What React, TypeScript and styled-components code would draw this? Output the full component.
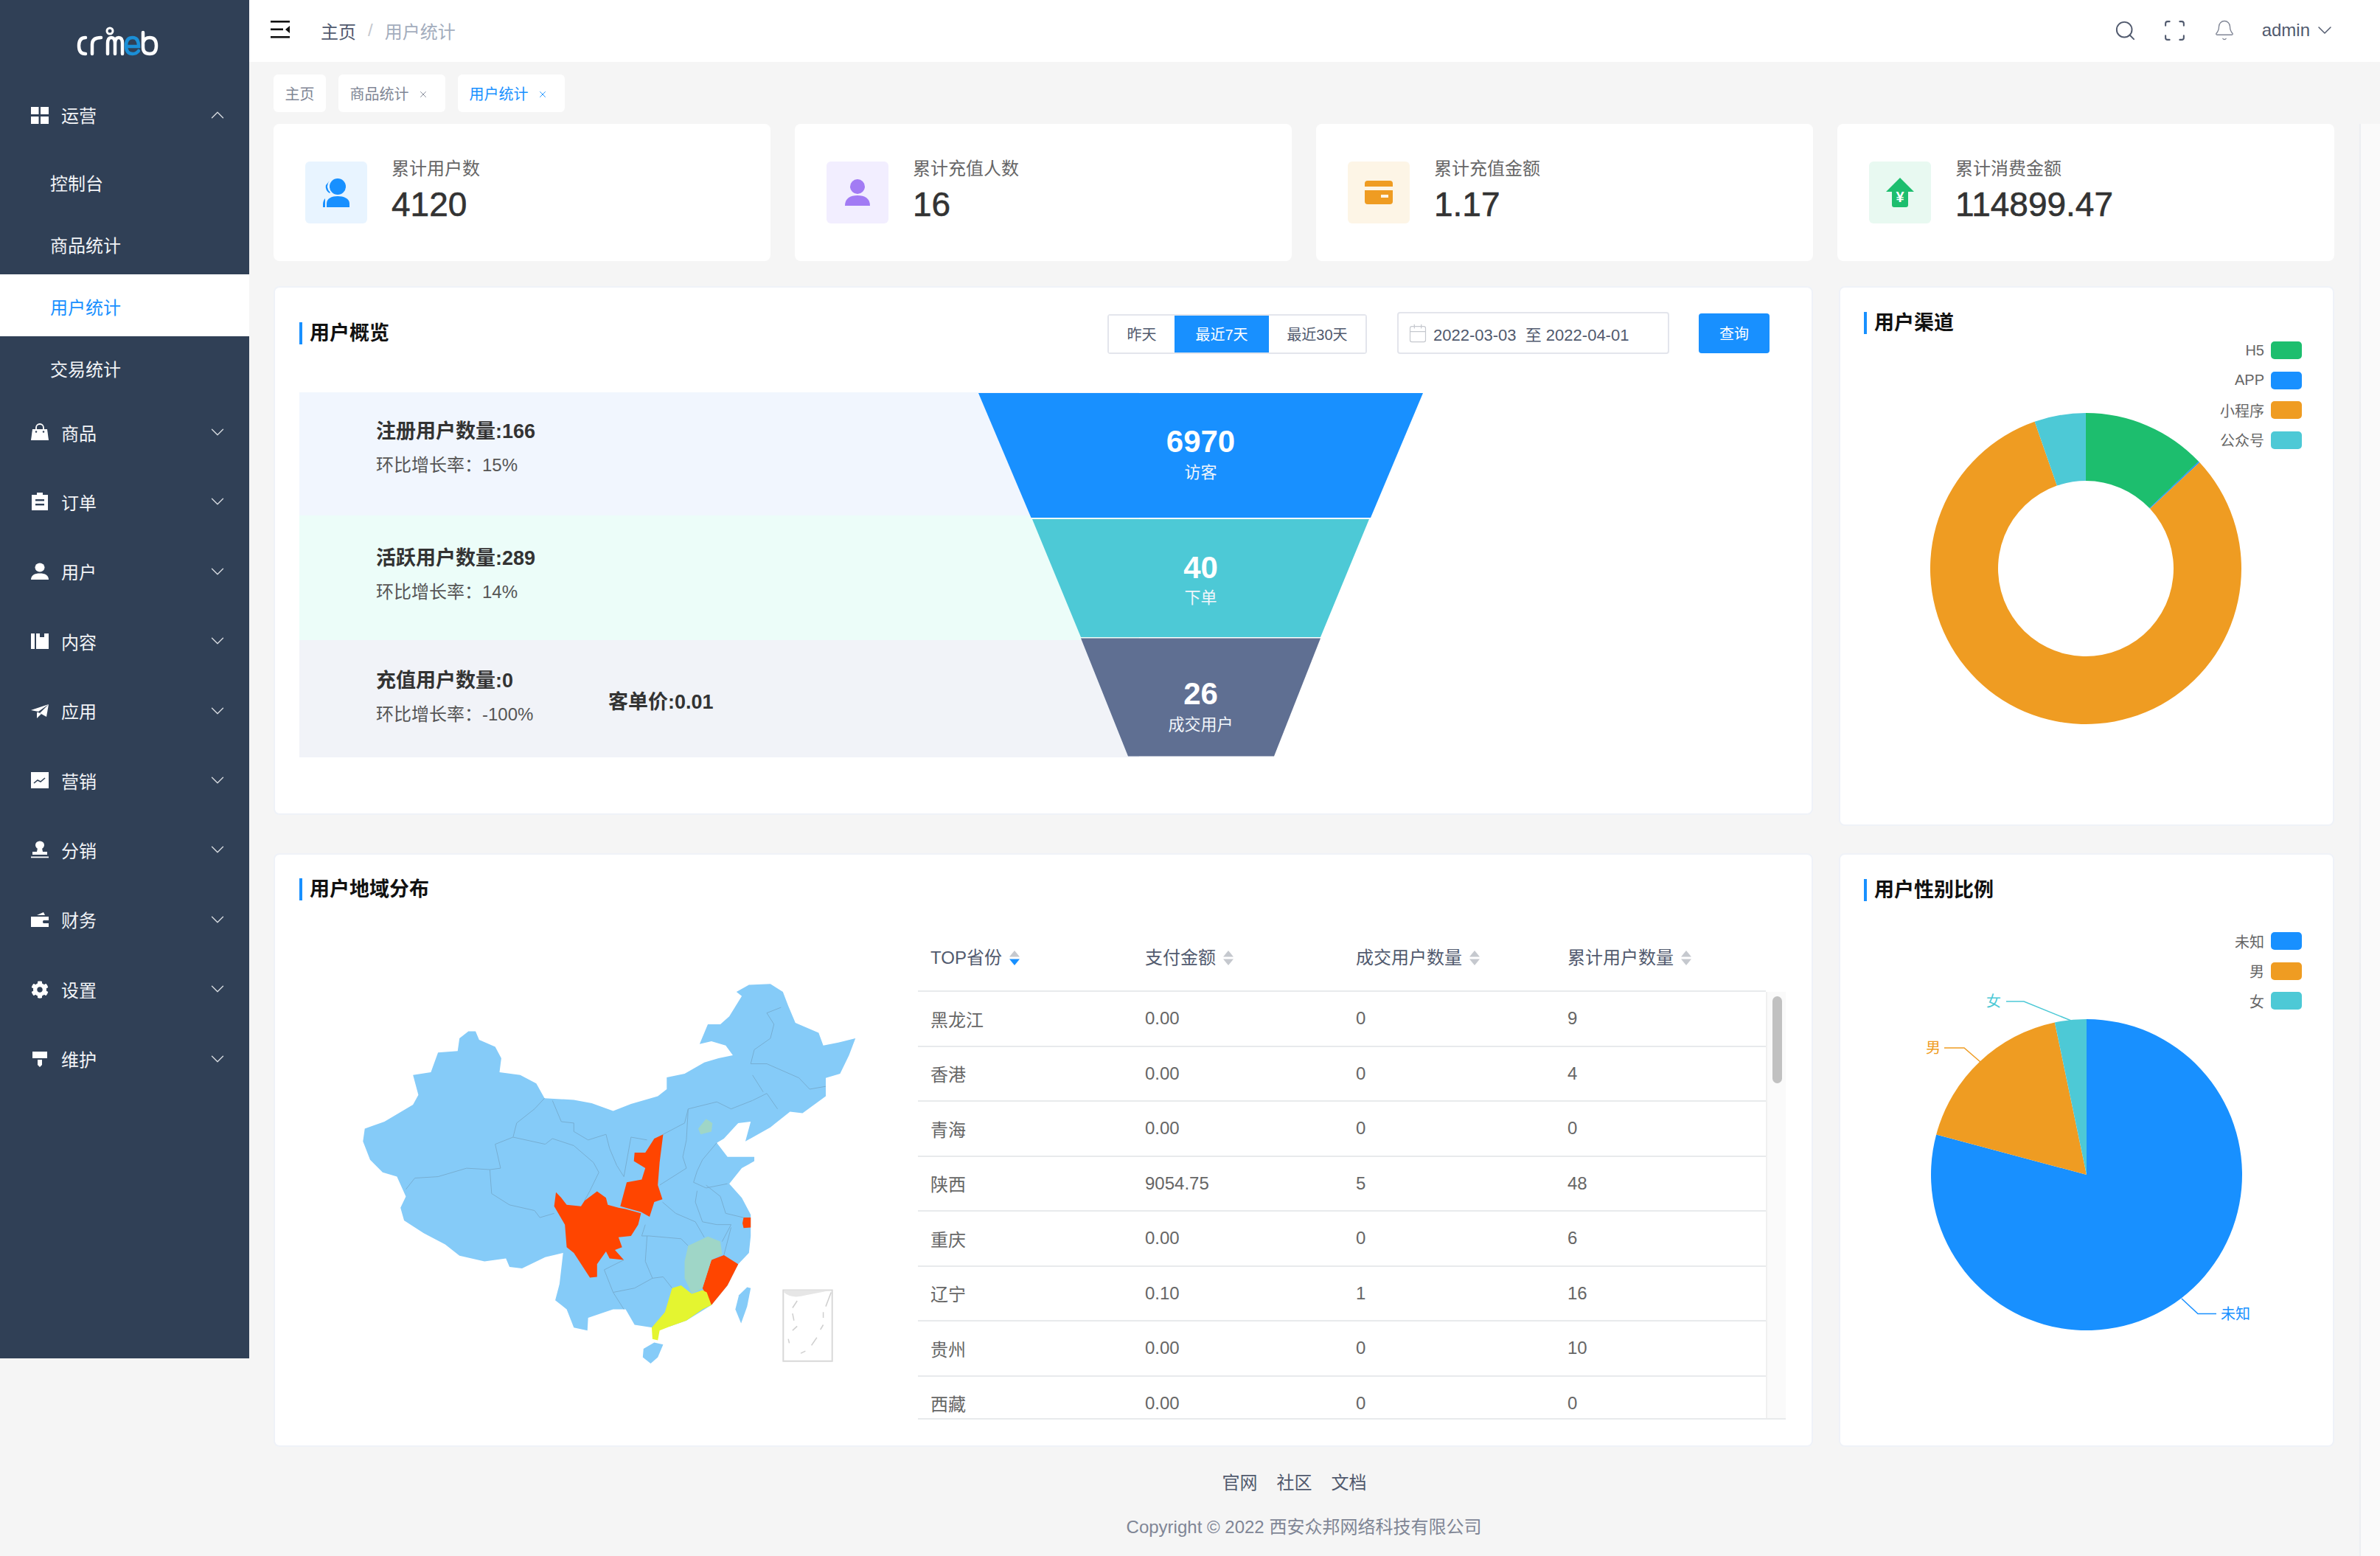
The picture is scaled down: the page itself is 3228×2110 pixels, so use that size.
import React from 'react';
import styled, { createGlobalStyle } from 'styled-components';
import { Search, Scan, Bell, ChevronDown, ChevronUp, Calendar, X } from 'lucide-react';
import { FaCog } from 'react-icons/fa';

const GlobalStyle = createGlobalStyle`
  html, body { margin: 0; padding: 0; background: #f5f5f5; }
  body { font-family: "Liberation Sans", "Noto Sans CJK SC", sans-serif; color: #515a6e; }
  * { box-sizing: border-box; }
`;

const Page = styled.div`
  display: flex;
  align-items: flex-start;
  width: 3228px;
  height: 2110px;
  overflow: hidden;
  background: #f5f5f5;
`;

/* sidebar */
const Sidebar = styled.aside`
  flex: 0 0 338px;
  height: 1842px;
  background: #304056;
  color: #f2f4f7;
`;
const LogoBox = styled.div`
  height: 110px;
  padding: 36px 0 0 104px;
`;
const MenuRow = styled.div`
  display: flex;
  align-items: center;
  height: 94.4px;
  padding: 0 28px 3px 42px;
  font-size: 24px;
`;
const MenuIcon = styled.span`
  display: flex;
  width: 24px;
  height: 24px;
  margin-right: 17px;
  color: #fff;
`;
const MenuLabel = styled.span`
  flex: 1;
`;
const SubRow = styled.div<{ $active?: boolean }>`
  display: flex;
  align-items: center;
  height: 84px;
  padding: 2px 0 0 68px;
  font-size: 24px;
  background: ${(p) => (p.$active ? '#fff' : 'transparent')};
  color: ${(p) => (p.$active ? '#1890ff' : '#f2f4f7')};
`;

/* main column */
const Main = styled.div`
  flex: 1;
  min-width: 0;
`;
const TopBar = styled.header`
  display: flex;
  align-items: center;
  height: 84px;
  background: #fff;
  padding: 0 59px 2px 29px;
  font-size: 24px;
`;
const Crumb = styled.span<{ $muted?: boolean }>`
  color: ${(p) => (p.$muted ? '#a3adbd' : '#515a6e')};
`;
const CrumbSep = styled.span`
  color: #c5c8ce;
  margin: 0 16px;
`;
const ToggleBox = styled.span`
  display: flex;
  margin: 0 42px 3px 0;
`;
const TopSpacer = styled.div`
  flex: 1;
`;
const TopIcon = styled.span<{ $gap: number }>`
  display: flex;
  margin-right: ${(p) => p.$gap}px;
  color: #515a6e;
`;
const UserCaret = styled.span`
  display: flex;
  margin-left: 4px;
  color: #515a6e;
`;
const TabBar = styled.nav`
  display: flex;
  gap: 17px;
  height: 84px;
  padding: 17px 0 0 33px;
`;
const Tab = styled.div<{ $active?: boolean }>`
  display: flex;
  align-items: center;
  height: 51px;
  padding: 0 15.5px;
  border-radius: 6px;
  background: #fff;
  font-size: 20px;
  color: ${(p) => (p.$active ? '#1890ff' : '#808695')};
  svg { margin: 2px 8px 0 12px; }
`;
const ScrollArea = styled.div`
  display: flex;
  align-items: flex-start;
`;
const Content = styled.div`
  width: 2862px;
  padding: 0 34px 0 33px;
`;
const PageTrack = styled.div`
  flex: 1;
  height: 1942px;
  background: #fafafa;
  border-left: 2px solid #eceef2;
`;

/* stat cards */
const StatGrid = styled.section`
  display: grid;
  grid-template-columns: repeat(4, 1fr);
  gap: 33px;
`;
const StatCard = styled.div`
  display: flex;
  height: 186px;
  padding: 49px 0 0 43px;
  background: #fff;
  border-radius: 8px;
`;
const StatIcon = styled.div<{ $bg: string }>`
  display: flex;
  align-items: center;
  justify-content: center;
  flex: 0 0 84px;
  height: 84px;
  margin: 2px 33px 0 0;
  border-radius: 6px;
  background: ${(p) => p.$bg};
`;
const StatLabel = styled.div`
  font-size: 24px;
  line-height: 24px;
  color: #666;
`;
const StatValue = styled.div`
  margin-top: 6px;
  font-size: 46px;
  line-height: 60px;
  color: #333;
  -webkit-text-stroke: 0.6px #333;
`;

/* panels */
const PanelRow = styled.section`
  display: grid;
  grid-template-columns: 1fr 672px;
  gap: 35px;
  align-items: start;
`;
const FirstPanels = styled(PanelRow)`
  margin-top: 34px;
`;
const SecondPanels = styled(PanelRow)`
  margin-top: 37px;
`;
const Panel = styled.div<{ $height: number }>`
  position: relative;
  height: ${(p) => p.$height}px;
  background: #fff;
  border: 2px solid #eff2f8;
  border-radius: 8px;
`;
const PanelTitle = styled.h3`
  margin: 0;
  height: 30px;
  padding-left: 10px;
  border-left: 4px solid #1890ff;
  font-size: 27px;
  line-height: 30px;
  font-weight: 600;
  color: #111;
`;
const SideHead = styled.div`
  padding: 33px 32px 0;
`;
const MapHead = styled.div`
  padding: 32px 33px 0;
`;

/* overview */
const OverviewHead = styled.div`
  display: flex;
  align-items: center;
  justify-content: space-between;
  height: 57px;
  margin: 33px 57px 0 33px;
`;
const Controls = styled.div`
  display: flex;
  align-items: center;
`;
const RangeGroup = styled.div`
  display: flex;
  height: 54px;
  margin-top: 2px;
  margin-right: 41px;
  border: 2px solid #e3e5ec;
  border-radius: 4px;
  font-size: 20px;
  color: #515a6e;
`;
const RangeItem = styled.div<{ $active?: boolean; $w: number }>`
  display: flex;
  align-items: center;
  justify-content: center;
  width: ${(p) => p.$w}px;
  background: ${(p) => (p.$active ? '#1890ff' : '#fff')};
  color: ${(p) => (p.$active ? '#fff' : '#515a6e')};
`;
const DateBox = styled.div`
  display: flex;
  align-items: center;
  width: 369px;
  height: 57px;
  margin-right: 40px;
  padding-left: 12px;
  border: 2px solid #e3e5ec;
  border-radius: 4px;
  font-size: 22px;
  color: #515a6e;
  svg { margin-right: 7px; }
`;
const QueryButton = styled.button`
  width: 96px;
  height: 54px;
  border: 0;
  border-radius: 4px;
  background: #1890ff;
  color: #fff;
  font: inherit;
  font-size: 20px;
`;
const FunnelStage = styled.div`
  position: relative;
  width: 1139px;
  margin: 52px 0 0 33px;
`;
const FunnelRow = styled.div<{ $bg: string; $h: number; $top: number }>`
  display: flex;
  align-items: flex-start;
  height: ${(p) => p.$h}px;
  padding: ${(p) => p.$top}px 0 0 104px;
  background: ${(p) => p.$bg};
`;
const Metric = styled.div`
  width: 315px;
`;
const MetricTitle = styled.div`
  font-size: 27px;
  line-height: 40px;
  font-weight: 600;
  color: #333;
`;
const MetricSub = styled.div`
  margin-top: 9px;
  font-size: 24px;
  line-height: 34px;
  color: #555;
`;
const PerUnit = styled(MetricTitle)`
  margin-top: 29px;
`;
const FunnelSvg = styled.svg`
  position: absolute;
  left: 921px;
  top: 0;
`;

/* charts */
const Legend = styled.div<{ $top: number }>`
  position: absolute;
  right: 42px;
  top: ${(p) => p.$top}px;
  display: flex;
  flex-direction: column;
  gap: 16.5px;
`;
const LegendItem = styled.div`
  display: flex;
  align-items: center;
  justify-content: flex-end;
  gap: 9px;
  height: 24px;
  font-size: 20px;
  color: #666;
`;
const Swatch = styled.span<{ $color: string }>`
  width: 42px;
  height: 24px;
  border-radius: 5px;
  background: ${(p) => p.$color};
`;
const ChartSvg = styled.svg<{ $top: number }>`
  display: block;
  position: absolute;
  left: 0;
  top: ${(p) => p.$top}px;
`;

/* map + table */
const MapBody = styled.div`
  display: flex;
  align-items: flex-start;
  margin-top: 37px;
  padding-left: 66px;
`;
const MapSvg = styled.svg`
  flex: 0 0 760px;
  margin-top: 20px;
  margin-right: 46px;
`;
const TableBox = styled.div`
  width: 1177px;
`;
const HeadGrid = styled.div`
  display: grid;
  grid-template-columns: 291px 286px 287px 1fr;
  width: 1150px;
  height: 87px;
  padding: 26px 0 0 17px;
  border-bottom: 2px solid #e8eaec;
  font-size: 24px;
  line-height: 30px;
  color: #515a6e;
`;
const HeadCell = styled.div`
  display: flex;
  align-items: center;
  height: 30px;
  svg { margin-left: 9px; }
`;
const TableBody = styled.div`
  display: flex;
  height: 580px;
  border-bottom: 2px solid #e8eaec;
`;
const RowsClip = styled.div`
  width: 1150px;
  overflow: hidden;
`;
const BodyRow = styled.div`
  display: grid;
  grid-template-columns: 291px 286px 287px 1fr;
  align-items: center;
  height: 74.5px;
  padding-left: 17px;
  border-bottom: 2px solid #e8eaec;
  font-size: 24px;
  color: #666;
`;
const TableTrack = styled.div`
  flex: 1;
  padding: 6px 5px 0 7px;
  background: #fafafa;
  border-left: 2px solid #f0f0f0;
`;
const TableThumb = styled.div`
  height: 118px;
  border-radius: 8px;
  background: #c1c1c1;
`;

/* footer */
const Footer = styled.footer`
  padding-top: 34px;
  text-align: center;
`;
const FooterLinks = styled.div`
  font-size: 24px;
  line-height: 30px;
  color: #515a6e;
  span { margin-right: 26px; }
`;
const Copyright = styled.div`
  margin-top: 30px;
  font-size: 24px;
  line-height: 30px;
  color: #808695;
`;

const DARK = '#304056';
const BLUE = '#1890ff';
const TEAL = '#4dc9d6';
const ORANGE = '#ef9c22';
const GREEN = '#1dbe6e';

const Logo = () => (
  <svg width="112" height="40" viewBox="0 0 112 40" fill="none" stroke="#fff" strokeWidth="4.5" strokeLinecap="round">
    <path d="M12 15Q3 15 3 26Q3 37 12 37" />
    <path d="M21 37V24Q21 15 33 15" />
    <path d="M42 37V23Q42 15 47 15Q52 15 52 23V37M52 23Q52 15 57 15Q62 15 62 23V37" />
    <path d="M68 27H84Q84 15 76 15Q67 15 67 26Q67 37 76 37Q81 37 84 33" stroke="#1b8fd6" />
    <path d="M90 8V28Q90 37 99 37Q108 37 108 26Q108 15 99 15Q92 15 90 22" />
    <circle cx="45" cy="6" r="4" strokeWidth="3" />
  </svg>
);

const sideIcons: Record<string, React.ReactNode> = {
  grid: (
    <svg viewBox="0 0 24 24" width="24" height="24" fill="currentColor">
      <rect x="0" y="1" width="10.5" height="10" />
      <rect x="13" y="1" width="11" height="10" />
      <rect x="0" y="14" width="10.5" height="10" />
      <rect x="13" y="14" width="11" height="10" />
    </svg>
  ),
  bag: (
    <svg viewBox="0 0 24 24" width="24" height="24" fill="currentColor">
      <path d="M2 8h20l2 15H0z" />
      <path d="M7 9V6a5 5 0 0 1 10 0v3" fill="none" stroke="currentColor" strokeWidth="1.8" />
      <circle cx="7" cy="11.5" r="1.2" fill={DARK} />
      <circle cx="17" cy="11.5" r="1.2" fill={DARK} />
    </svg>
  ),
  order: (
    <svg viewBox="0 0 24 24" width="24" height="24" fill="currentColor">
      <path d="M1 3h7V0h8v3h7v21H1z" />
      <rect x="6" y="9" width="12" height="2.4" fill={DARK} />
      <rect x="6" y="15" width="12" height="2.4" fill={DARK} />
    </svg>
  ),
  user: (
    <svg viewBox="0 0 24 24" width="24" height="24" fill="currentColor">
      <ellipse cx="12" cy="6.5" rx="6.5" ry="6" />
      <path d="M0 23c0-6 5-8.500 12-8.500S24 17 24 23z" />
    </svg>
  ),
  content: (
    <svg viewBox="0 0 24 24" width="24" height="24" fill="currentColor">
      <rect x="0" y="2" width="5" height="21" />
      <path d="M7 2h5v5h6V2h6v21H7z" />
    </svg>
  ),
  plane: (
    <svg viewBox="0 0 24 24" width="24" height="24" fill="currentColor">
      <path d="M0 11 24 3 10 13z" />
      <path d="M24 3 21 20 12 15z" />
      <path d="M8 14l2 0 4 2-6 6z" />
    </svg>
  ),
  chart: (
    <svg viewBox="0 0 24 24" width="24" height="24" fill="currentColor">
      <rect x="0" y="1" width="24" height="22" />
      <path d="M4 16l5-4 4 2 6-5" fill="none" stroke={DARK} strokeWidth="1.6" />
    </svg>
  ),
  stamp: (
    <svg viewBox="0 0 24 24" width="24" height="24" fill="currentColor">
      <ellipse cx="12" cy="6" rx="6" ry="5.500" />
      <path d="M9 10h6l1 5h6v4H2v-4h6z" />
      <rect x="0" y="21.500" width="24" height="1.800" />
    </svg>
  ),
  wallet: (
    <svg viewBox="0 0 24 24" width="24" height="24" fill="currentColor">
      <path d="M8 6l9-4 2 4z" />
      <path d="M0 8h24v5h-7a2.500 2.500 0 0 0 0 4h7v5H0z" />
    </svg>
  ),
  gear: <FaCog size={26} />,
  pin: (
    <svg viewBox="0 0 24 24" width="24" height="24" fill="currentColor">
      <rect x="2" y="2" width="20" height="9" />
      <path d="M9 13h6v7l-3 3-3-3z" />
    </svg>
  ),
};

const menuAfter = [
  { label: '商品', icon: 'bag' },
  { label: '订单', icon: 'order' },
  { label: '用户', icon: 'user' },
  { label: '内容', icon: 'content' },
  { label: '应用', icon: 'plane' },
  { label: '营销', icon: 'chart' },
  { label: '分销', icon: 'stamp' },
  { label: '财务', icon: 'wallet' },
  { label: '设置', icon: 'gear' },
  { label: '维护', icon: 'pin' },
];

const tableRows = [
  ['黑龙江', '0.00', '0', '9'],
  ['香港', '0.00', '0', '4'],
  ['青海', '0.00', '0', '0'],
  ['陕西', '9054.75', '5', '48'],
  ['重庆', '0.00', '0', '6'],
  ['辽宁', '0.10', '1', '16'],
  ['贵州', '0.00', '0', '10'],
  ['西藏', '0.00', '0', '0'],
];

const SortIcon = ({ active }: { active?: boolean }) => (
  <svg width="16" height="20" viewBox="0 0 16 20">
    <path d="M8 0l7 8.500H1z" fill="#c5c8ce" />
    <path d="M8 20l7-8.500H1z" fill={active ? BLUE : '#c5c8ce'} />
  </svg>
);

// pie slice, angles in degrees clockwise from 12 o'clock
const slice = (cx: number, cy: number, r: number, inner: number, a: number, b: number) => {
  const pt = (rad: number, deg: number) => {
    const t = (deg * Math.PI) / 180;
    return `${cx + rad * Math.sin(t)} ${cy - rad * Math.cos(t)}`;
  };
  const large = b - a > 180 ? 1 : 0;
  if (!inner) return `M${cx} ${cy}L${pt(r, a)}A${r} ${r} 0 ${large} 1 ${pt(r, b)}Z`;
  return `M${pt(r, a)}A${r} ${r} 0 ${large} 1 ${pt(r, b)}L${pt(inner, b)}A${inner} ${inner} 0 ${large} 0 ${pt(inner, a)}Z`;
};

const chinaOutline =
  '405,315 425,315 435,345 480,370 497,410 492,460 550,470 595,500 618,552 700,558 750,570 810,597 860,572 935,545 960,520 960,478 1010,465 1065,425 1105,410 1145,400 1125,365 1085,350 1052,360 1075,290 1110,290 1135,262 1170,190 1155,175 1190,150 1250,147 1285,175 1300,225 1320,285 1385,320 1398,365 1440,355 1488,340 1470,400 1445,465 1405,480 1405,545 1340,605 1305,600 1250,655 1180,705 1195,635 1160,640 1120,695 1100,710 1130,760 1205,760 1205,775 1170,800 1135,855 1170,905 1195,965 1195,1040 1190,1100 1160,1140 1130,1215 1085,1285 1015,1340 970,1360 920,1365 870,1355 845,1300 810,1300 740,1330 738,1375 700,1365 680,1300 648,1268 660,1210 670,1100 620,1115 555,1155 520,1150 510,1120 450,1130 380,1110 340,1070 280,1030 225,985 215,940 230,900 205,830 165,815 130,770 110,705 115,660 170,635 250,575 265,540 250,470 300,460 320,390 375,385 380,340';

const provinceLines = [
  '618,552 590,590 540,640 530,690 480,715 495,800 465,805 400,800 320,830 255,835 230,875',
  '530,690 620,715 640,695 700,720 755,780 770,815 745,880 730,915',
  '465,805 470,890 520,930 590,950 605,975 645,960',
  '640,560 665,635 700,640 700,670 740,700 790,680 800,730 820,790 840,830 860,690 905,700',
  '950,680 1010,640 1020,590 1100,565 1140,590 1200,560 1240,535 1270,590',
  '1195,430 1205,380 1250,340 1260,290 1240,250 1280,230',
  '1195,430 1240,430 1330,480 1360,520 1405,510',
  '1200,470 1230,530',
  '1020,590 1015,700 1005,760 1015,800 940,860',
  '1100,710 1060,770 1045,810 1035,850 1070,870 1130,855',
  '948,920 985,960 1040,990 1065,1045',
  '1045,880 1040,920 1060,990 1100,1000 1140,1000 1115,1060',
  '1070,860 1110,900 1125,960 1175,975',
  '900,1000 890,1040 910,1040 1000,1050 1020,1075',
  '905,1040 900,1130 920,1190 870,1225 810,1240 785,1160 840,1125',
  '920,1190 950,1185 975,1225',
  '810,1240 840,1300',
  '1120,1108 1140,1010',
];

const ChinaMap = () => (
  <MapSvg width="760" height="600" viewBox="0 0 1568 1568" preserveAspectRatio="none">
    <polygon points={chinaOutline} fill="#85cbf8" />
    <polygon points="1185,1222 1195,1225 1185,1290 1168,1350 1152,1300 1162,1250" fill="#85cbf8" />
    <polygon points="925,1418 950,1425 935,1470 915,1492 893,1470 895,1440" fill="#85cbf8" />
    {provinceLines.map((pts) => (
      <polyline key={pts} points={pts} fill="none" stroke="#76aed2" strokeWidth="1" vectorEffect="non-scaling-stroke" />
    ))}
    <polygon points="650,885 665,905 680,930 720,935 730,915 765,882 790,905 795,930 825,940 845,945 888,960 880,1000 860,1040 825,1045 835,1080 815,1090 840,1125 800,1120 790,1095 765,1140 765,1185 745,1188 700,1100 680,1080 675,1000 645,935" fill="#ff4500" />
    <polygon points="925,695 950,680 945,730 940,780 935,860 948,910 925,920 912,972 888,955 830,935 848,850 890,840 900,800 868,775 870,745 900,745" fill="#ff4500" />
    <polygon points="1120,1108 1160,1140 1130,1215 1085,1285 1060,1225 1085,1125" fill="#ff4500" />
    <polygon points="1175,975 1195,975 1195,1010 1175,1012 1172,995" fill="#ff4500" />
    <polygon points="1020,1075 1075,1042 1110,1060 1115,1105 1085,1125 1060,1225 1030,1245 1010,1190 1010,1130" fill="#9fd6c7" />
    <polygon points="1070,625 1088,640 1085,670 1055,680 1048,660" fill="#9fd6c7" />
    <polygon points="975,1225 1000,1215 1030,1245 1060,1232 1072,1240 1085,1285 1060,1300 1015,1340 970,1360 940,1375 935,1410 920,1405 918,1365 955,1310" fill="#e4f530" />
    <rect x="1286" y="1232" width="137" height="252" fill="#fff" stroke="#d8d8d8" strokeWidth="2" vectorEffect="non-scaling-stroke" />
    <path d="M1288 1240Q1310 1265 1350 1250L1422 1232H1288z" fill="#e6e6e6" />
    <path d="M1420 1240 1405 1290M1398 1310V1330M1398 1355 1390 1372M1325 1360 1312 1375M1312 1315 1316 1340M1325 1270 1312 1295M1300 1405 1303 1420M1380 1400 1365 1428M1348 1448 1335 1456" stroke="#cfcfcf" strokeWidth="1.500" vectorEffect="non-scaling-stroke" fill="none" />
  </MapSvg>
);

const stats = [
  {
    label: '累计用户数',
    value: '4120',
    bg: '#e8f4ff',
    icon: (
      <svg width="40" height="42" viewBox="0 0 40 42" fill={BLUE}>
        <circle cx="22" cy="13" r="11" />
        <path d="M7 41V36c0-7 7-10 15-10s16 3 16 10v5z" />
        <path d="M11 5a11 11 0 0 0 1 16l-1 1C7 20 5 15 6 11z" />
        <path d="M5 29c-2 2-3 5-3 8v4h3z" />
      </svg>
    ),
  },
  {
    label: '累计充值人数',
    value: '16',
    bg: '#f2eeff',
    icon: (
      <svg width="38" height="38" viewBox="0 0 38 38" fill="#a27bf4">
        <circle cx="19" cy="11" r="10" />
        <path d="M2 37c0-10 7-14 17-14s17 4 17 14z" />
      </svg>
    ),
  },
  {
    label: '累计充值金额',
    value: '1.17',
    bg: '#fdf5e6',
    icon: (
      <svg width="38" height="32" viewBox="0 0 38 32">
        <rect x="0" y="0" width="38" height="32" rx="4" fill={ORANGE} />
        <rect x="0" y="8" width="38" height="5" fill="#fdf5e6" />
        <rect x="22" y="19" width="10" height="4" fill="#fdf5e6" />
      </svg>
    ),
  },
  {
    label: '累计消费金额',
    value: '114899.47',
    bg: '#e8f9f1',
    icon: (
      <svg width="38" height="40" viewBox="0 0 38 40">
        <path d="M19 0l19 19H30v18a3 3 0 0 1-3 3H11a3 3 0 0 1-3-3V19H0z" fill={GREEN} />
        <text x="19" y="33" textAnchor="middle" fontSize="20" fontWeight="700" fill="#fff">¥</text>
      </svg>
    ),
  },
];

const funnel = [
  { pts: '0,1 603,1 532,170 71.500,170', fill: BLUE, num: '6970', numY: 66, sub: '访客', subY: 108 },
  { pts: '73,172 530,172 464,332 139,332', fill: TEAL, num: '40', numY: 237, sub: '下单', subY: 278 },
  { pts: '139,333.500 464,333.500 401,493.500 203,493.500', fill: '#5f6f92', num: '26', numY: 408, sub: '成交用户', subY: 450 },
];

const Funnel = () => (
  <FunnelSvg width="603" height="495" viewBox="0 0 603 495">
    {funnel.map((s) => (
      <g key={s.num}>
        <polygon points={s.pts} fill={s.fill} />
        <text x="301.500" y={s.numY} dy="15" textAnchor="middle" fontSize="42" fontWeight="700" fill="#fff">{s.num}</text>
        <text x="301.500" y={s.subY} dy="8" textAnchor="middle" fontSize="22" fill="#f2f6fb">{s.sub}</text>
      </g>
    ))}
  </FunnelSvg>
);

export default function App() {
  return (
    <Page>
      <GlobalStyle />
      <Sidebar>
        <LogoBox><Logo /></LogoBox>
        <MenuRow>
          <MenuIcon>{sideIcons.grid}</MenuIcon>
          <MenuLabel>运营</MenuLabel>
          <ChevronUp size={30} strokeWidth={1.1} color="#d7dbe0" />
        </MenuRow>
        <SubRow>控制台</SubRow>
        <SubRow>商品统计</SubRow>
        <SubRow $active>用户统计</SubRow>
        <SubRow>交易统计</SubRow>
        {menuAfter.map((m) => (
          <MenuRow key={m.label}>
            <MenuIcon>{sideIcons[m.icon]}</MenuIcon>
            <MenuLabel>{m.label}</MenuLabel>
            <ChevronDown size={30} strokeWidth={1.1} color="#d7dbe0" />
          </MenuRow>
        ))}
      </Sidebar>

      <Main>
        <TopBar>
          <ToggleBox>
            <svg width="26" height="24" viewBox="0 0 26 24" fill="#111">
              <rect x="0" y="0" width="26" height="2.600" />
              <rect x="0" y="10.500" width="17" height="2.600" />
              <rect x="0" y="21" width="26" height="2.600" />
              <path d="M26 7v10l-6-5z" />
            </svg>
          </ToggleBox>
          <Crumb>主页</Crumb>
          <CrumbSep>/</CrumbSep>
          <Crumb $muted>用户统计</Crumb>
          <TopSpacer />
          <TopIcon $gap={35}><Search size={31} strokeWidth={1.5} /></TopIcon>
          <TopIcon $gap={36}><Scan size={33} strokeWidth={1.5} /></TopIcon>
          <TopIcon $gap={36}><Bell size={30} strokeWidth={1.1} color="#808695" /></TopIcon>
          <Crumb>admin</Crumb>
          <UserCaret><ChevronDown size={32} strokeWidth={1.1} /></UserCaret>
        </TopBar>
        <TabBar>
          <Tab>主页</Tab>
          <Tab>商品统计<X size={14} strokeWidth={1.6} /></Tab>
          <Tab $active>用户统计<X size={14} strokeWidth={1.6} /></Tab>
        </TabBar>
        <ScrollArea>
          <Content>
            <StatGrid>
              {stats.map((s) => (
                <StatCard key={s.label}>
                  <StatIcon $bg={s.bg}>{s.icon}</StatIcon>
                  <div>
                    <StatLabel>{s.label}</StatLabel>
                    <StatValue>{s.value}</StatValue>
                  </div>
                </StatCard>
              ))}
            </StatGrid>

            <FirstPanels>
              <Panel $height={717}>
                <OverviewHead>
                  <PanelTitle>用户概览</PanelTitle>
                  <Controls>
                    <RangeGroup>
                      <RangeItem $w={89}>昨天</RangeItem>
                      <RangeItem $w={128} $active>最近7天</RangeItem>
                      <RangeItem $w={131}>最近30天</RangeItem>
                    </RangeGroup>
                    <DateBox>
                      <Calendar size={28} strokeWidth={1} color="#c5c8ce" />
                      2022-03-03&nbsp;&nbsp;至&nbsp;2022-04-01
                    </DateBox>
                    <QueryButton>查询</QueryButton>
                  </Controls>
                </OverviewHead>
                <FunnelStage>
                  <FunnelRow $bg="#f1f6fe" $h={167} $top={33}>
                    <Metric>
                      <MetricTitle>注册用户数量:166</MetricTitle>
                      <MetricSub>环比增长率：15%</MetricSub>
                    </Metric>
                  </FunnelRow>
                  <FunnelRow $bg="#ecfdf9" $h={169} $top={38}>
                    <Metric>
                      <MetricTitle>活跃用户数量:289</MetricTitle>
                      <MetricSub>环比增长率：14%</MetricSub>
                    </Metric>
                  </FunnelRow>
                  <FunnelRow $bg="#f1f3f8" $h={159} $top={35}>
                    <Metric>
                      <MetricTitle>充值用户数量:0</MetricTitle>
                      <MetricSub>环比增长率：-100%</MetricSub>
                    </Metric>
                    <PerUnit>客单价:0.01</PerUnit>
                  </FunnelRow>
                  <Funnel />
                </FunnelStage>
              </Panel>

              <Panel $height={732}>
                <SideHead><PanelTitle>用户渠道</PanelTitle></SideHead>
                <Legend $top={73}>
                  <LegendItem>H5<Swatch $color={GREEN} /></LegendItem>
                  <LegendItem>APP<Swatch $color={BLUE} /></LegendItem>
                  <LegendItem>小程序<Swatch $color={ORANGE} /></LegendItem>
                  <LegendItem>公众号<Swatch $color={TEAL} /></LegendItem>
                </Legend>
                <ChartSvg $top={150} width="668" height="480" viewBox="2496 540 668 480">
                  <path d={slice(2829, 771, 211, 119, 0, 46.5)} fill={GREEN} />
                  <path d={slice(2829, 771, 211, 119, 46.5, 47)} fill={BLUE} />
                  <path d={slice(2829, 771, 211, 119, 47, 340.8)} fill={ORANGE} />
                  <path d={slice(2829, 771, 211, 119, 340.8, 359.99)} fill={TEAL} />
                </ChartSvg>
              </Panel>
            </FirstPanels>

            <SecondPanels>
              <Panel $height={805}>
                <MapHead><PanelTitle>用户地域分布</PanelTitle></MapHead>
                <MapBody>
                  <ChinaMap />
                  <TableBox>
                    <HeadGrid>
                      <HeadCell>TOP省份<SortIcon active /></HeadCell>
                      <HeadCell>支付金额<SortIcon /></HeadCell>
                      <HeadCell>成交用户数量<SortIcon /></HeadCell>
                      <HeadCell>累计用户数量<SortIcon /></HeadCell>
                    </HeadGrid>
                    <TableBody>
                      <RowsClip>
                        {tableRows.map((r) => (
                          <BodyRow key={r[0]}>
                            {r.map((c, i) => <div key={i}>{c}</div>)}
                          </BodyRow>
                        ))}
                      </RowsClip>
                      <TableTrack><TableThumb /></TableTrack>
                    </TableBody>
                  </TableBox>
                </MapBody>
              </Panel>

              <Panel $height={805}>
                <SideHead><PanelTitle>用户性别比例</PanelTitle></SideHead>
                <Legend $top={105}>
                  <LegendItem>未知<Swatch $color={BLUE} /></LegendItem>
                  <LegendItem>男<Swatch $color={ORANGE} /></LegendItem>
                  <LegendItem>女<Swatch $color={TEAL} /></LegendItem>
                </Legend>
                <ChartSvg $top={161} width="668" height="520" viewBox="2496 1320 668 520">
                  <path d={slice(2830, 1593, 211, 0, 0, 285)} fill={BLUE} />
                  <path d={slice(2830, 1593, 211, 0, 285, 348.2)} fill={ORANGE} />
                  <path d={slice(2830, 1593, 211, 0, 348.2, 360)} fill={TEAL} />
                  <polyline points="2721,1358 2745,1358 2809,1384" fill="none" stroke={TEAL} strokeWidth="1.500" />
                  <polyline points="2637,1421 2664,1421 2686,1440" fill="none" stroke={ORANGE} strokeWidth="1.500" />
                  <polyline points="2959,1761 2981,1781.500 3006,1781.500" fill="none" stroke={BLUE} strokeWidth="1.500" />
                  <text x="2704" y="1365" textAnchor="middle" fontSize="20" fill={TEAL}>女</text>
                  <text x="2622" y="1428" textAnchor="middle" fontSize="20" fill={ORANGE}>男</text>
                  <text x="3012" y="1789" fontSize="20" fill={BLUE}>未知</text>
                </ChartSvg>
              </Panel>
            </SecondPanels>

            <Footer>
              <FooterLinks><span>官网</span><span>社区</span><span>文档</span></FooterLinks>
              <Copyright>Copyright © 2022 西安众邦网络科技有限公司</Copyright>
            </Footer>
          </Content>
          <PageTrack />
        </ScrollArea>
      </Main>
    </Page>
  );
}
